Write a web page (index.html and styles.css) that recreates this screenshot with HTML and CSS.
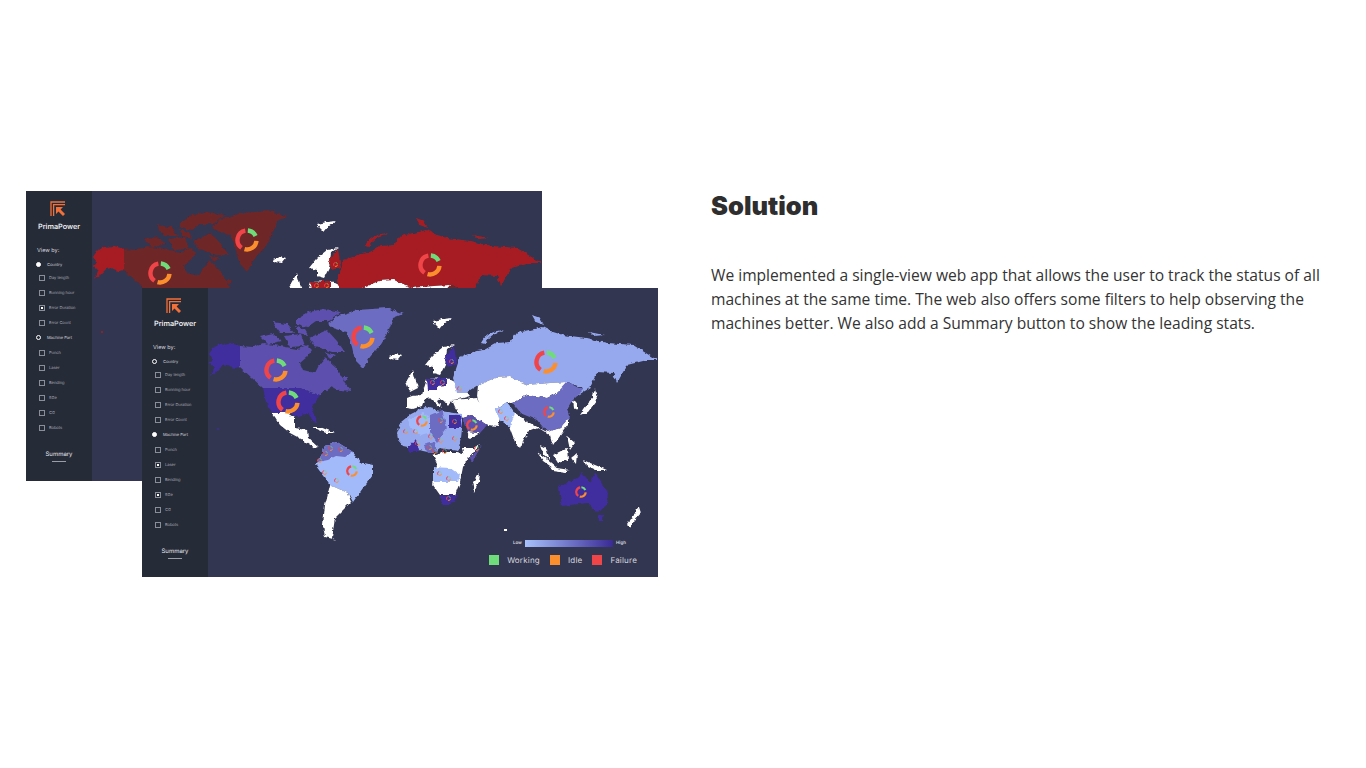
FILE: index.html
```html
<!DOCTYPE html>
<html lang="en">
<head>
    <meta charset="UTF-8">
    <meta name="viewport" content="width=device-width, initial-scale=1.0">
    <title>Solution</title>
    <link rel="stylesheet" href="styles.css">
</head>
<body>
    <svg class="defs" width="0" height="0">
        <defs>
            <filter id="coast" filterUnits="userSpaceOnUse" x="0" y="0" width="450" height="290">
                <feTurbulence type="fractalNoise" baseFrequency="0.22" numOctaves="2" seed="4" result="noise"/>
                <feDisplacementMap in="SourceGraphic" in2="noise" scale="4" xChannelSelector="R" yChannelSelector="G"/>
            </filter>
            <symbol id="logo" viewBox="0 0 16 16">
                <path d="M1 15V1H15M3.6 15V3.6H15" fill="none" stroke="#f2703a" stroke-width="1.3"/>
                <path d="M6 6H13L10.6 8.4L15 13L13 15L8.5 10.5L6 13Z" fill="#f2703a"/>
            </symbol>
            <symbol id="donut" viewBox="0 0 24 24">
                <path d="M10.35 2.64A9.5 9.5 0 0 0 6.55 19.78" fill="none" stroke="#ef4549" stroke-width="4.4"/>
                <path d="M12.83 2.54A9.5 9.5 0 0 1 20.61 7.99" fill="none" stroke="#6fdc7a" stroke-width="4.4"/>
                <path d="M21.46 12.83A9.5 9.5 0 0 1 9.54 21.18" fill="none" stroke="#fc8f2d" stroke-width="4.4"/>
            </symbol>
            <symbol id="world" viewBox="0 0 450 290">
                <g filter="url(#coast)">
                    <!-- north america -->
                    <path class="deep" d="M1 66L5 60L12 56L22 55L32 58V79L26 80L20 77L14 78L8 84L3 88L6 80L2 76L5 71Z"/>
                    <path class="mid" d="M32 58L45 59L55 55L72 58L89 61L99 57L104 62L99 69L92 75L95 82L107 85L112 75L117 69L129 80L137 95L144 103L132 102L122 99L112 107L102 104L92 100H55L32 79Z"/>
                    <path class="mid" d="M52 48L65 45L74 53L60 56ZM64 34L79 36L86 45L72 45ZM89 30L100 24L116 21L133 24L121 33L108 33L98 40L89 37ZM101 50L119 42L129 53L137 64L124 64L107 58ZM76 48L93 46L97 58L82 59ZM87 38L97 42L100 47L90 45ZM118 64L128 67L122 71ZM134 88L140 88L137 94Z"/>
                    <path class="soft" d="M119 35L132 27L149 22L179 20L195 26L185 30L180 44L172 57L162 69L155 80L147 72L144 59L139 44L125 40Z"/>
                    <path class="deep" d="M55 100H92L102 104L112 107L109 112L104 119L109 134L105 133L100 125L88 129L80 125L64 125L58 115Z"/>
                    <path class="land" d="M64 125L79 125L87 130L87 140L99 142L100 150L110 159L107 160L95 152L82 145L72 137L67 129ZM104 139L112 139L127 145L118 145L110 142ZM181 68L188 65L194 67L190 72L183 71ZM225 33L235 31L244 30L236 36L232 41L228 37Z"/>
                    <!-- south america -->
                    <path class="light" d="M108 177L115 164L117 157L129 154L145 164L152 174L165 177L165 187L155 200L145 214L140 205L122 197L117 189Z"/>
                    <path class="soft" d="M117 157L129 154L145 164L137 169L128 168L120 172L110 174L115 164Z"/>
                    <path class="land" d="M122 197L140 205L143 214L135 222L127 230L124 250L129 252L117 249L115 237L117 217Z"/>
                    <!-- europe -->
                    <path class="land" d="M217 77L225 67L235 59L247 57L239 62L237 77L232 87L225 85L225 79ZM198 94L205 82L210 100L202 104ZM199 110L204 108L214 107L216 100L219 91L239 90L247 94L259 104L262 108L255 110L244 112L240 118L236 113L232 110L229 112L234 120L228 116L222 110L216 112L214 118L205 121L199 120Z"/>
                    <path class="deep" d="M237 69L246 58L249 77L239 79ZM219 91H229V102H220ZM229 90H239V97L229 98Z"/>
                    <path class="pale" d="M247 97L259 99V105L249 105Z"/>
                    <!-- russia and asia -->
                    <path class="pale" d="M245 90L252 69L264 64L276 62L289 55L302 54L309 45L322 42L335 39L345 44L355 47L378 50L399 55L425 57L449 72L439 72L419 77L409 95L405 85L389 84L382 100L365 110L375 100L359 94L342 95L320 97L302 89L287 90L270 97L259 104L247 97Z"/>
                    <path class="pale" d="M273 55C277 47 285 43 295 42C288 45 281 48 277 56ZM324 27L332 30L336 37L328 34ZM381 44L396 47L385 48Z"/>
                    <path class="land" d="M270 97L287 90L302 89L320 97L342 95L359 94V100L349 105L339 110L320 107L304 115L299 114L287 122L272 115L269 109ZM244 112L269 110L272 115L289 122L292 130L290 138L279 137L264 127L255 130L250 124L247 119ZM259 144L272 145L262 151ZM300 135L307 125L320 134L339 144L330 140L320 144L312 160L307 154ZM339 144L352 140L360 129L360 137L352 148L345 158L342 147L332 141ZM332 157L338 160L342 172L336 167ZM365 112L370 115L370 122L366 120ZM372 127L385 108L387 100L389 112L380 124Z"/>
                    <path class="soft" d="M304 115L320 107L339 110L349 105L359 94L375 102L365 112L359 122L362 129L352 140L339 144L329 132L312 125Z"/>
                    <path class="light" d="M287 122L299 114L307 125L302 139L292 132Z"/>
                    <path class="land" d="M329 164L338 170L349 179L345 180L335 173ZM342 179L362 182L358 184L344 182ZM345 167L359 160L360 172L350 175ZM363 170L369 165L368 176ZM375 172L399 182L388 182L378 177ZM359 148L367 155L362 162Z"/>
                    <!-- africa -->
                    <path class="pale" d="M189 145L193 134L203 126L217 119L232 123L254 126V141L253 150L250 163L232 160L225 165L215 163L205 160L195 158L190 152Z"/>
                    <path class="light" d="M200 132L215 125L222 130L224 144L212 147L205 142Z"/>
                    <path class="soft" d="M222 127L234 122L239 140L229 154L222 144ZM215 157L227 154L229 164L220 165Z"/>
                    <path class="deep" d="M241 127H252L254 140H241ZM200 160L207 152L212 160L209 164L202 164ZM232 208L250 207L247 214L240 217L234 217Z"/>
                    <path class="land" d="M225 167L234 164L250 164L262 167L255 179L252 194L247 207L232 207L225 197L227 184L230 177ZM254 160L265 160L272 156L262 169L255 165ZM264 194L272 186L271 194L266 204Z"/>
                    <path class="light" d="M225 179L242 180L252 187L250 194L239 194L225 194Z"/>
                    <path class="mid" d="M262 170L274 157L270 164L264 174ZM255 130L264 127L279 137L272 145L260 144Z"/>
                    <!-- australia -->
                    <path class="deep" d="M351 199L369 190L374 185L382 194L387 185L400 205L399 217L389 224L379 215L354 218L352 208ZM390 227H395L394 232L391 232Z"/>
                    <path class="land" d="M419 237L431 219L433 225L426 233L422 240Z"/>
                </g>
                <circle class="deep" cx="10" cy="141" r="1"/>
                <rect class="land" x="296" y="241" width="3" height="2"/>
                <!-- donuts -->
                <use href="#donut" x="56" y="70" width="24" height="24"/>
                <use href="#donut" x="143" y="37" width="24" height="24"/>
                <use href="#donut" x="68" y="102" width="24" height="24"/>
                <use href="#donut" x="326" y="62" width="24" height="24"/>
                <use href="#donut" x="335" y="118" width="12" height="12"/>
                <use href="#donut" x="138" y="177" width="12" height="12"/>
                <use href="#donut" x="208" y="127" width="12" height="12"/>
                <use href="#donut" x="258" y="131" width="12" height="12"/>
                <use href="#donut" x="367" y="198" width="12" height="12"/>
                <!-- small country markers -->
                <use href="#donut" x="241" y="71" width="5" height="5"/>
                <use href="#donut" x="222" y="92" width="5" height="5"/>
                <use href="#donut" x="232" y="92" width="5" height="5"/>
                <use href="#donut" x="249" y="98" width="5" height="5"/>
                <use href="#donut" x="230" y="130" width="5" height="5"/>
                <use href="#donut" x="244" y="131" width="5" height="5"/>
                <use href="#donut" x="195" y="141" width="5" height="5"/>
                <use href="#donut" x="205" y="141" width="5" height="5"/>
                <use href="#donut" x="220" y="146" width="5" height="5"/>
                <use href="#donut" x="230" y="150" width="5" height="5"/>
                <use href="#donut" x="244" y="148" width="5" height="5"/>
                <use href="#donut" x="207" y="153" width="5" height="5"/>
                <use href="#donut" x="219" y="157" width="5" height="5"/>
                <use href="#donut" x="224" y="161" width="5" height="5"/>
                <use href="#donut" x="234" y="161" width="5" height="5"/>
                <use href="#donut" x="229" y="183" width="5" height="5"/>
                <use href="#donut" x="238" y="188" width="5" height="5"/>
                <use href="#donut" x="238" y="208" width="5" height="5"/>
                <use href="#donut" x="266" y="158" width="5" height="5"/>
                <use href="#donut" x="290" y="121" width="5" height="5"/>
                <use href="#donut" x="296" y="128" width="5" height="5"/>
                <use href="#donut" x="120" y="158" width="5" height="5"/>
                <use href="#donut" x="115" y="163" width="5" height="5"/>
                <use href="#donut" x="130" y="159" width="5" height="5"/>
                <use href="#donut" x="109" y="170" width="5" height="5"/>
                <use href="#donut" x="114" y="182" width="5" height="5"/>
                <use href="#donut" x="126" y="190" width="5" height="5"/>
            </symbol>
        </defs>
    </svg>

    <main class="page">
        <div class="stage">
            <div class="shot shot-back">
                <aside class="side">
                    <svg class="logo"><use href="#logo"/></svg>
                    <div class="brand">PrimaPower</div>
                    <div class="view-by">View by:</div>
                    <div class="row radio on"><i></i>Country</div>
                    <div class="row check"><i></i>Day length</div>
                    <div class="row check"><i></i>Running hour</div>
                    <div class="row check on"><i></i>Error Duration</div>
                    <div class="row check"><i></i>Error Count</div>
                    <div class="row radio part"><i></i>Machine Part</div>
                    <div class="row check"><i></i>Punch</div>
                    <div class="row check"><i></i>Laser</div>
                    <div class="row check"><i></i>Bending</div>
                    <div class="row check"><i></i>SGe</div>
                    <div class="row check"><i></i>CG</div>
                    <div class="row check"><i></i>Robots</div>
                    <div class="summary">Summary</div>
                </aside>
                <svg class="map"><use href="#world"/></svg>
            </div>
            <div class="shot shot-front">
                <aside class="side">
                    <svg class="logo"><use href="#logo"/></svg>
                    <div class="brand">PrimaPower</div>
                    <div class="view-by">View by:</div>
                    <div class="row radio"><i></i>Country</div>
                    <div class="row check"><i></i>Day length</div>
                    <div class="row check"><i></i>Running hour</div>
                    <div class="row check"><i></i>Error Duration</div>
                    <div class="row check"><i></i>Error Count</div>
                    <div class="row radio part on"><i></i>Machine Part</div>
                    <div class="row check"><i></i>Punch</div>
                    <div class="row check on"><i></i>Laser</div>
                    <div class="row check"><i></i>Bending</div>
                    <div class="row check on"><i></i>SGe</div>
                    <div class="row check"><i></i>CG</div>
                    <div class="row check"><i></i>Robots</div>
                    <div class="summary">Summary</div>
                </aside>
                <svg class="map"><use href="#world"/></svg>
                <div class="legend">
                    <div class="scale"><span>Low</span><b></b><span>High</span></div>
                    <div class="keys">
                        <i class="key-green"></i><span>Working</span>
                        <i class="key-orange"></i><span>Idle</span>
                        <i class="key-red"></i><span>Failure</span>
                    </div>
                </div>
            </div>
        </div>

        <section class="copy">
            <h2>Solution</h2>
            <p>We implemented a single-view web app that allows the user to track the status of all machines at the same time. The web also offers some filters to help observing the machines better. We also add a Summary button to show the leading stats.</p>
        </section>
    </main>
</body>
</html>
```

FILE: styles.css
```css
body {
    margin: 0;
    background-color: #fff;
    font-family: "Open Sans", sans-serif;
}

.defs {
    position: absolute;
}

.page {
    display: flex;
    align-items: flex-start;
    padding: 191px 0 0 26px;
    height: 577px;
    box-sizing: border-box;
}

.stage {
    position: relative;
    flex: none;
    width: 632px;
    height: 387px;
}

.shot {
    display: flex;
    width: 516px;
    height: 290px;
    background-color: #333651;
}

.shot-back {
    --deep: #a71e20;
    --mid: #6e2528;
    --soft: #6e2528;
    --pale: #a71e20;
    --light: #a71e20;
}

.shot-front {
    --deep: #3f2d9e;
    --mid: #5b50ae;
    --soft: #6d6cc3;
    --pale: #97a9ee;
    --light: #a3bafa;
    position: absolute;
    left: 116px;
    top: 97px;
}

.deep { fill: var(--deep); }
.mid { fill: var(--mid); }
.soft { fill: var(--soft); }
.pale { fill: var(--pale); }
.light { fill: var(--light); }
.land { fill: #fff; }

.map {
    flex: none;
    width: 450px;
    height: 290px;
}

.map use {
    width: 450px;
    height: 290px;
}

/* sidebar */
.side {
    flex: none;
    display: flex;
    flex-direction: column;
    box-sizing: border-box;
    width: 66px;
    padding-top: 10px;
    background-color: #262b38;
    color: #a9acb6;
    font-family: Inter, sans-serif;
    text-rendering: geometricPrecision;
}

.logo {
    width: 16px;
    height: 16px;
    margin-left: 24px;
}

.logo use {
    width: 16px;
    height: 16px;
}

.brand {
    margin-top: 3px;
    color: #fff;
    font-size: 7.3px;
    line-height: 14px;
    font-weight: 500;
    text-align: center;
}

.view-by {
    margin: 12px 0 3px 11px;
    color: #d5d7de;
    font-size: 5.5px;
    line-height: 10px;
}

.row {
    display: flex;
    align-items: center;
    height: 15px;
    font-size: 4px;
    white-space: nowrap;
}

.radio {
    height: 11px;
    padding-left: 10px;
    gap: 6px;
    color: #d5d7de;
}

.radio i {
    box-sizing: border-box;
    width: 5px;
    height: 5px;
    border: 1.2px solid #fff;
    border-radius: 50%;
}

.radio.on i {
    background-color: #fff;
}

.part {
    margin: 2px 0 2px;
}

.check {
    padding-left: 13px;
    gap: 4px;
}

.check i {
    box-sizing: border-box;
    width: 6px;
    height: 6px;
    border: 1px solid #8a8e9a;
}

.check.on i {
    background: radial-gradient(circle, #fff 0 1px, transparent 1.2px);
}

.summary {
    position: relative;
    align-self: center;
    margin-top: 15px;
    color: #e6e7ec;
    font-size: 6px;
    line-height: 10px;
}

.summary::after {
    content: "";
    position: absolute;
    left: 7px;
    right: 7px;
    bottom: -2px;
    border-bottom: 1px solid #9a9da8;
}

/* legend over the map */
.legend {
    position: absolute;
    right: 21px;
    bottom: 13px;
    display: flex;
    flex-direction: column;
    align-items: flex-end;
    gap: 8px;
    color: #d5d7de;
    font-family: Inter, sans-serif;
    text-rendering: geometricPrecision;
}

.scale {
    display: flex;
    align-items: center;
    gap: 3px;
    margin-right: 11px;
    font-size: 4.5px;
    font-weight: 600;
}

.scale b {
    width: 88px;
    height: 7px;
    background: linear-gradient(90deg, #a7c1fb, #3a2a96);
}

.keys {
    display: flex;
    align-items: center;
    font-size: 8px;
    letter-spacing: 0.2px;
}

.keys i {
    width: 10px;
    height: 10px;
    margin-right: 8px;
}

.keys span {
    margin-right: 10px;
}

.keys span:last-child {
    margin-right: 0;
}

.key-green { background-color: #6fdc7a; }
.key-orange { background-color: #fc8f2d; }
.key-red { background-color: #ef4549; }

/* text column */
.copy {
    margin-left: 53px;
    width: 625px;
    color: #333;
}

.copy h2 {
    margin: 0;
    color: #2e2e2e;
    font-family: Inter, sans-serif;
    font-size: 25.5px;
    line-height: 30px;
    font-weight: 900;
}

.copy p {
    margin: 42px 0 0;
    font-size: 15.6px;
    line-height: 24px;
}
```
